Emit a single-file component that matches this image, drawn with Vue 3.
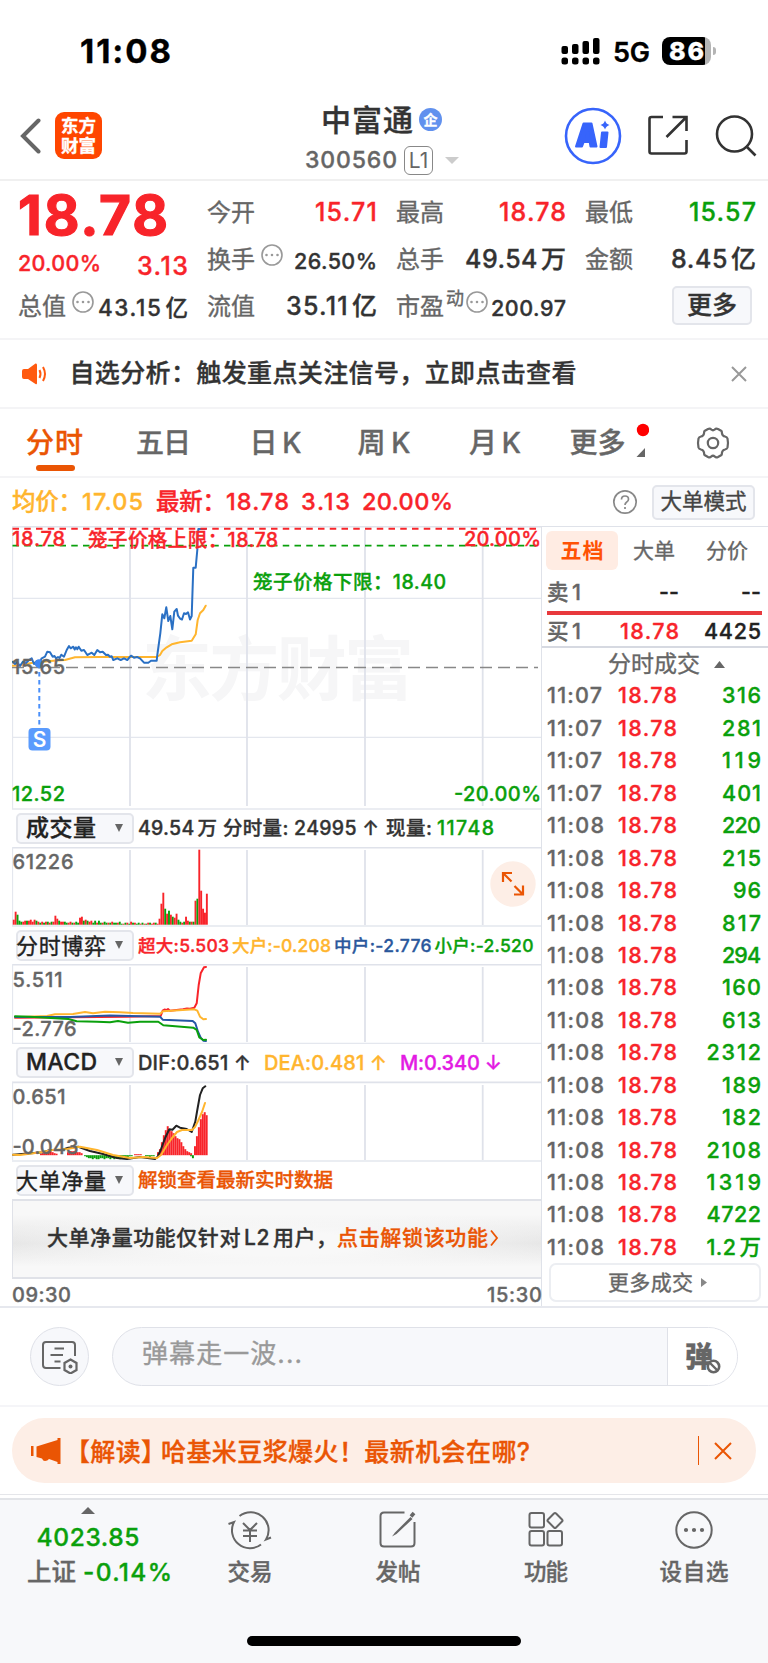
<script setup>
// Spreads the letters of an element so that its text takes up the given width.
const vFit = {
  mounted(el, { value }) {
    const count = Array.from(el.textContent).length
    if (count < 2) return
    const gap = (value - el.getBoundingClientRect().width) / (count - 1)
    el.style.letterSpacing = gap + 'px'
    el.style.marginRight = -gap + 'px'
  }
}

const tabs = [
  { name: '分时', left: 26, width: 57, active: true },
  { name: '五日', left: 136, width: 55 },
  { name: '日K', left: 249.5, width: 52 },
  { name: '周K', left: 357.5, width: 53 },
  { name: '月K', left: 469, width: 52 },
  { name: '更多', left: 569.5, width: 56 }
]

const trades = [
  ['11:07', '316'], ['11:07', '281'], ['11:07', '119'], ['11:07', '401'],
  ['11:08', '220'], ['11:08', '215'], ['11:08', '96'], ['11:08', '817'],
  ['11:08', '294'], ['11:08', '160'], ['11:08', '613'], ['11:08', '2312'],
  ['11:08', '189'], ['11:08', '182'], ['11:08', '2108'], ['11:08', '1319'],
  ['11:08', '4722'], ['11:08', '1.2', '万']
]
const volWidth = ([, v, unit]) => (unit || v.length === 4 ? 54.5 : v.length === 3 ? 39 : 28)

const gridX = [130, 247, 365, 482.7]

const priceLine =
  '12.7,661.7 15,664 17,662 20,666 23,661.5 26,663 29,660 31.7,658.3 34,664 37,661 39,664 41.7,658.3 45,656.7 47.3,651.7 50,652.3 52.7,656.7 54.5,656 56,658.3 58,657 59.5,658 61.3,654.7 64,656.7 66.7,650 69,646 70.7,648.3 73.3,646.7 74.7,649.5 76,647.3 77.3,649.3 78.7,646.7 81.3,650.7 84,650 87.3,655 89.5,653.8 91.7,652.7 94.3,655 97.3,650 100,652.3 102.7,651.7 106,655 108,654.8 110,656.7 111.7,656.3 113.3,660 117.3,658.3 120.7,660 124,658.3 127.3,660 131,655.7 134,657.7 137,657 140,658.3 144,662.7 148.3,662.7 151,660.7 153.3,660.7 156.7,660.7 157.3,655 160.3,633.3 162.3,614.3 164.3,618.3 166.3,607.3 168.3,621 170.3,616 172.3,629.3 174.3,611.7 176.7,609 178,615.7 180,618.5 182,619.5 184,613.3 186,614 188,612.3 190,619.5 191.7,616 193.3,567.7 195.7,567.7 197.3,550 198.3,529 205.7,529'
const avgLine =
  '12.5,665.7 20,665 33,662.7 50,661 65,660 75,657.3 100,657 156.7,657 160,655 162.3,651 166.7,647.3 171.7,644.3 180,642.3 191.7,640.7 195.7,634.3 197.7,620 200,613.3 203.3,610 205.7,605.7'

// Volume bars, one per minute: height, with a minus sign for a falling minute.
const volumes = [
  5, 13, -10, -4, -3, 3, 4, -4, 4, 5, 3, 5, -4, 3, -2, 3, -2, 3, -3, 2, -3, 3, 9, 6, -4, 3, 3, -3, -2, 2, 3, -2,
  2, -3, -2, 7, 8, -4, 5, -4, 3, 4, -2, -4, 2, -4, -2, 2, -3, -2, 2, -2, 3, -2, -2, 2, -3, -1, 1, -2, 2, -1, 3, -2,
  2, -1, -2, 1, -2, 1, -1, 2, -2, 1, 2, -2, 1, 6, 21, 32, -16, 11, -14, 10, -8, 7, 11,
  -5, -3, 2, -3, 8, 4, -3, 3, -3, 24, -26, 75, 34, 16, 12, 31
]
const barStep = 195 / volumes.length

const gameLines = [
  { color: '#f8242a', points: '15,1017.7 127,1016.7 160.7,1016 162.7,1010.7 164.5,1009.6 166.7,1010 168,1009 170,1010.8 183,1009.3 187,1008.5 190,1008.7 194.3,1007.8 196.7,1003.3 198.7,985 200.7,973.3 204,967.3 206,967' },
  { color: '#ffb52e', points: '15,1017.3 47,1016 55,1014.3 73,1014 85,1012 93,1013.3 105,1011.7 120,1012.3 133,1013 160,1013.7 163,1011.2 194.3,1009.3 197.3,1010.7 200,1016.7 203.3,1019.3 206,1019' },
  { color: '#2456a5', points: '15,1017 70,1017 110,1015.5 160,1016.7 162.7,1019.7 192.7,1020.9 195.3,1023.3 198,1031.7 200.7,1037.7 203.3,1040.7 206,1041' },
  { color: '#0aa00c', points: '15,1016.3 30,1016.7 46.7,1017.7 68.3,1019 76.7,1021.3 97,1021.7 110,1022.3 118,1021 128,1022.7 140,1021.7 158.3,1021.7 163.3,1025.3 193.3,1027.7 196.7,1030 199.3,1037.3 203.3,1040 206,1039.7' }
]

const span = (x0, heights) => heights.map((h, i) => ({ x: x0 + i * 1.95, h }))
const macdBars = [
  ...span(40, [1.5, 2, 3, 4, 4, 4, 3, 2, 1.5]),
  ...span(67, [3, 4, 4, 4, 4, 3, 3, 2]),
  ...span(84, [-1, -2, -3, -3, -4, -3, -4, -4, -3, -3, -4, -3, -3, -4, -3, -4, -3, -3, -4, -3, -2, -2, -2, -1, -1]),
  ...span(134, [1, 1, 1, 1]),
  ...span(145, [-1, -1, -2, -1, -1]),
  ...span(157, [3, 6, 13, 20, 25, 29, 26, 24, 22, 19, 17, 16, 13, 9, 6, 4, 3, 2]),
  ...span(190, [-1, -3]),
  ...span(194, [9, 19, 28, 36, 41, 43, 40])
]
const difLine =
  '13,1154.7 43,1152.3 50,1150 61.7,1150 68.3,1147.7 78.3,1146.7 90,1151 103,1154 117,1158 127,1159 140,1157 155,1159 157.7,1156.7 160.7,1150 165,1138.3 169.3,1129.3 172.5,1129.7 176.3,1125.7 180,1127.7 186.7,1129 191.7,1132 195.3,1121.7 197.3,1110 200,1095 202.7,1088.3 205.3,1086.3'
const deaLine =
  '13,1154.7 20,1155 43,1152 52,1150 67,1149 80,1146.7 97,1150 113,1155 130,1158 143,1157 157,1158 161,1155 167,1145 172,1138 177,1132 182,1130 192,1130 195,1127 198,1121 202,1112 205,1103'
</script>

<template>
  <div class="page">
    <div class="status">
      <b class="clock" v-fit="91">11:08</b>
      <svg class="signal" width="40" height="28" viewBox="0 0 40 28">
        <rect x="0.5" y="9" width="6.5" height="8" rx="2" /><rect x="11" y="7" width="6.5" height="10" rx="2" />
        <rect x="21.5" y="4" width="6.5" height="13" rx="2" /><rect x="32" y="1" width="6.5" height="16" rx="2" />
        <rect x="0.5" y="20.5" width="6.5" height="7" rx="2.5" /><rect x="11" y="20.5" width="6.5" height="7" rx="2.5" />
        <rect x="21.5" y="20.5" width="6.5" height="7" rx="2.5" /><rect x="32" y="20.5" width="6.5" height="7" rx="2.5" />
      </svg>
      <span class="net" v-fit="37">5G</span>
      <div class="battery"><b v-fit="35">86</b></div>
      <i class="nub"></i>
    </div>

    <header class="header">
      <svg class="back" width="22" height="36" viewBox="0 0 22 36"><path d="M18.500 2.500 3 18l15.500 15.500" fill="none" stroke="#666" stroke-width="4" stroke-linecap="round" /></svg>
      <div class="logo"><b>东方</b><b>财富</b></div>
      <div class="stock">
        <div class="name"><span v-fit="92">中富通</span><i class="corp">企</i></div>
        <div class="code"><span v-fit="92">300560</span><i class="level">L1</i><svg width="14" height="8" viewBox="0 0 14 8"><path d="M0 0h14L7 7z" fill="#ccc" /></svg></div>
      </div>
      <svg class="ai" width="58" height="58" viewBox="0 0 58 58">
        <circle cx="29" cy="29" r="27" fill="#fff" stroke="#3764fb" stroke-width="2.600" />
        <g fill="#3764fb" stroke="#3764fb" stroke-width="2" stroke-linejoin="round">
          <path fill-rule="evenodd" d="M12 39.500 19.500 16.500h8L32.500 39.500h-6l-.8-4.500h-6L18 39.500zM22 30h3l-.8-5z" />
          <path d="M38 25.500h5.500L42 40h-5.500z" />
        </g>
        <path d="M41 13.500q1 3.500 4.500 4.500q-3.500 1-4.500 4.500q-1-3.500-4.500-4.500q3.500-1 4.500-4.500z" fill="#3764fb" />
      </svg>
      <svg class="share" width="42" height="42" viewBox="0 0 42 42" fill="none" stroke="#333" stroke-width="2.600">
        <path d="M16 2H4.500Q2.500 2 2.500 4v32.500q0 2 2 2h33q2 0 2-2V25M25.500 2H39.500V16M39 2.500 19.500 22" />
      </svg>
      <svg class="search" width="42" height="42" viewBox="0 0 42 42" fill="none" stroke="#333" stroke-width="2.600">
        <circle cx="19.500" cy="19" r="17.500" /><path d="M31 31l9.500 9.500" />
      </svg>
    </header>

    <section class="quote">
      <div class="col">
        <div class="cell big"><b class="up" v-fit="150">18.78</b></div>
        <div class="cell change"><span class="up n21" v-fit="83">20.00%</span><span class="up n25 low" v-fit="51">3.13</span></div>
        <div class="cell"><label v-fit="48">总值</label><svg class="more-info" viewBox="0 0 22 22"><circle cx="11" cy="11" r="10" /><path d="M5.500 11h.01M11 11h.01M16.500 11h.01" /></svg><span class="n22 low" v-fit="90">43.15<em>亿</em></span></div>
      </div>
      <div class="col">
        <div class="cell"><label v-fit="48">今开</label><span class="up n25" v-fit="62">15.71</span></div>
        <div class="cell"><label v-fit="48">换手</label><svg class="more-info" viewBox="0 0 22 22"><circle cx="11" cy="11" r="10" /><path d="M5.500 11h.01M11 11h.01M16.500 11h.01" /></svg><span class="n21 low" v-fit="83">26.50%</span></div>
        <div class="cell"><label v-fit="48">流值</label><span class="n25" v-fit="91">35.11<em>亿</em></span></div>
      </div>
      <div class="col">
        <div class="cell"><label v-fit="48">最高</label><span class="up n25" v-fit="67">18.78</span></div>
        <div class="cell"><label v-fit="48">总手</label><span class="n25" v-fit="101">49.54<em>万</em></span></div>
        <div class="cell"><label v-fit="48">市盈</label><sup>动</sup><svg class="more-info tight" viewBox="0 0 22 22"><circle cx="11" cy="11" r="10" /><path d="M5.500 11h.01M11 11h.01M16.500 11h.01" /></svg><span class="n21 low" v-fit="75">200.97</span></div>
      </div>
      <div class="col">
        <div class="cell"><label v-fit="48">最低</label><span class="down n25" v-fit="67">15.57</span></div>
        <div class="cell"><label v-fit="48">金额</label><span class="n25" v-fit="85">8.45<em>亿</em></span></div>
        <div class="cell"><button class="more"><span v-fit="50">更多</span></button></div>
      </div>
    </section>

    <section class="notice">
      <svg width="28" height="24" viewBox="0 0 28 24"><path d="M1 9q0-2 2-2h4l7.500-5.500Q16 1 16 3v18q0 2-1.500 1L7 17H3q-2 0-2-2z" fill="#ff5a10" /><path d="M18.500 8q2 4 0 8M22 5q4 7 0 14" fill="none" stroke="#ff5a10" stroke-width="2" /></svg>
      <span class="msg" v-fit="507">自选分析：触发重点关注信号，立即点击查看</span>
      <svg class="close" width="16" height="16" viewBox="0 0 16 16"><path d="M1 1l14 14M15 1 1 15" stroke="#999" stroke-width="2" /></svg>
    </section>

    <nav class="tabs">
      <div v-for="t in tabs" :key="t.name" class="tab" :class="{ active: t.active }" :style="{ '--x': t.left + 'px' }"><span v-fit="t.width">{{ t.name }}</span></div>
      <svg class="corner" width="14" height="40" viewBox="0 0 14 40"><circle cx="8" cy="8" r="6.200" fill="#f00" /><path d="M10 26v9H1.500z" fill="#666" /></svg>
      <svg class="gear" width="34" height="34" viewBox="-17 -17 34 34" fill="none" stroke="#666" stroke-width="2.200" stroke-linejoin="round">
        <path d="M-5-14Q-3-15-1.800-13.500Q0-12 1.800-13.500Q3-15 5-14L8.500-12Q9-11 9-9.500Q9.500-7 12-6.500Q14-6 14.500-4.500Q15.500 0 14.500 4.500Q14 6 12 6.500Q9.500 7 9 9.500Q9 11 8.500 12L5 14Q3 15 1.800 13.500Q0 12-1.800 13.500Q-3 15-5 14L-8.500 12Q-9 11-9 9.500Q-9.500 7-12 6.500Q-14 6-14.500 4.500Q-15.500 0-14.500-4.500Q-14-6-12-6.500Q-9.500-7-9-9.500Q-9-11-8.500-12Z" />
        <circle r="5.200" />
      </svg>
    </nav>

    <div class="summary">
      <span class="avg" v-fit="70">均价：</span><span class="avg" v-fit="61">17.05</span>
      <span class="up s-new" v-fit="70">最新：</span><span class="up" v-fit="63">18.78</span>
      <span class="up s-diff" v-fit="49">3.13</span>
      <span class="up s-pct" v-fit="91">20.00%</span>
      <svg class="help" width="26" height="26" viewBox="0 0 26 26" fill="none" stroke="#888" stroke-width="1.700"><circle cx="13" cy="13" r="11.200" /><path d="M9.500 10.500q0-3.500 3.500-3.500t3.500 3.200q0 1.800-2 3-1.500 1-1.500 2.800M13 18v2" /></svg>
      <button class="mode"><span v-fit="86">大单模式</span></button>
    </div>

    <main class="board">
      <div class="charts">
        <svg class="plot" width="529" height="284" viewBox="12 526 529 284">
          <text class="mark" x="142" y="695" textLength="272">东方财富</text>
          <g class="grid">
            <path class="wide" d="M12 526.500H541" /><path d="M12.500 526V809M12 598.300H541M12 737.300H541" /><path d="M12 809H541" />
            <path v-for="x in gridX" :key="x" class="wide" :d="`M${x} 530V806`" />
          </g>
          <path d="M12 667.500H538" stroke="#888" stroke-width="1.600" stroke-dasharray="12 6" />
          <polyline :points="avgLine" class="line" stroke="#ffb52e" />
          <polyline :points="priceLine" class="line" stroke="#2a70c4" />
          <path d="M12.500 528.700H538" stroke="#f8242a" stroke-width="2" stroke-dasharray="6.500 5.250" />
          <path d="M12.500 545.600H538" stroke="#0aa00c" stroke-width="1.900" stroke-dasharray="6.500 5.250" />
          <path d="M39.300 664V728" stroke="#4a90fa" stroke-width="2" stroke-dasharray="4.500 3.500" />
          <circle cx="39" cy="663.500" r="4.300" fill="#3f87f5" />
          <rect x="28.500" y="728" width="22" height="22.500" rx="4" fill="#5a9bfd" />
          <text x="39.500" y="746.500" text-anchor="middle" class="sell">S</text>
          <g class="axis">
            <text x="12" y="546" textLength="53" class="r">18.78</text>
            <text x="12" y="673.500" textLength="53">15.65</text>
            <text x="12" y="801" textLength="53" class="g">12.52</text>
            <text x="464" y="546" textLength="77" class="r">20.00%</text>
            <text x="454" y="801" textLength="87" class="g">-20.00%</text>
            <text x="88" y="547" textLength="190" class="limit r">笼子价格上限：18.78</text>
            <text x="253" y="588.500" textLength="193" class="limit g">笼子价格下限：18.40</text>
          </g>
        </svg>

        <div class="bar">
          <div class="pick"><span v-fit="70">成交量</span></div>
          <p class="vals"><span v-fit="79">49.54<em>万</em></span><span class="g1" v-fit="156">分时量: 24995 ↑</span><span class="g2" v-fit="46">现量:</span><span class="down g3" v-fit="57">11748</span></p>
        </div>
        <div class="layered">
          <svg class="plot" width="529" height="80" viewBox="12 847 529 80">
            <g class="grid"><path class="wide" d="M12 847.700H541" /><path d="M12.500 847V926M12 926H541" /><path v-for="x in gridX" :key="x" class="wide" :d="`M${x} 850V925`" /></g>
            <rect v-for="(v, i) in volumes" :key="i" :x="12.800 + i * barStep" :y="924.700 - Math.abs(v)" :width="barStep" :height="Math.abs(v)" :fill="v < 0 ? '#0aa00c' : '#f8242a'" />
            <g class="axis"><text x="12.500" y="869" textLength="61">61226</text></g>
          </svg>
          <svg class="expand" width="46" height="46" viewBox="0 0 46 46"><circle cx="23" cy="23" r="22.700" fill="#fdeee6" /><path d="M13 21v-9h9M13 12l8.500 8.500M33 24.500v9h-9M33 33.500 24.500 25" fill="none" stroke="#ea5504" stroke-width="2.200" /></svg>
        </div>

        <div class="bar">
          <div class="pick flush"><span v-fit="90">分时博弈</span></div>
          <p class="vals small"><span class="up" v-fit="91">超大:5.503</span><span class="gold g4" v-fit="99">大户:-0.208</span><span class="blue g4" v-fit="97.500">中户:-2.776</span><span class="down g4" v-fit="99">小户:-2.520</span></p>
        </div>
        <svg class="plot" width="529" height="80" viewBox="12 964 529 80">
          <g class="grid"><path class="wide" d="M12 964.700H541" /><path d="M12.500 964V1043M12 1043.500H541" /><path v-for="x in gridX" :key="x" class="wide" :d="`M${x} 967V1042`" /></g>
          <polyline v-for="l in gameLines" :key="l.color" :points="l.points" :stroke="l.color" class="line" />
          <g class="axis"><text x="12.500" y="986.500" textLength="50">5.511</text><text x="12.500" y="1036" textLength="64">-2.776</text></g>
        </svg>

        <div class="bar">
          <div class="pick"><span v-fit="71">MACD</span></div>
          <p class="vals macd"><span v-fit="113">DIF:0.651 ↑</span><span class="gold g5" v-fit="123">DEA:0.481 ↑</span><span class="pink g6" v-fit="102">M:0.340 ↓</span></p>
        </div>
        <svg class="plot" width="529" height="81" viewBox="12 1081 529 81">
          <g class="grid"><path class="wide" d="M12 1082.300H541" /><path d="M12.500 1082V1160M12 1161H541" /><path v-for="x in gridX" :key="x" class="wide" :d="`M${x} 1085V1160`" /></g>
          <rect v-for="b in macdBars" :key="b.x" :x="b.x" :y="b.h > 0 ? 1155.200 - b.h : 1155.200" width="1.950" :height="Math.abs(b.h)" :fill="b.h > 0 ? '#f8242a' : '#0aa00c'" />
          <polyline :points="difLine" class="line" stroke="#222" />
          <polyline :points="deaLine" class="line" stroke="#ffb52e" />
          <g class="axis"><text x="12.500" y="1104" textLength="53">0.651</text><text x="12.500" y="1153.500" textLength="66">-0.043</text></g>
        </svg>

        <div class="bar">
          <div class="pick flush"><span v-fit="90">大单净量</span></div>
          <p class="vals"><span class="orange" v-fit="195">解锁查看最新实时数据</span></p>
        </div>
        <div class="locked"><span v-fit="290">大单净量功能仅针对<em>L2</em><em>用</em>户，</span><span class="orange" v-fit="151">点击解锁该功能</span><svg width="9" height="18" viewBox="0 0 9 18"><path d="M1 1.500 7 9 1 16.500" fill="none" stroke="#ea5504" stroke-width="1.800" /></svg></div>
        <div class="hours"><span v-fit="59">09:30</span><span v-fit="55">15:30</span></div>
      </div>

      <aside class="depth">
        <div class="kinds"><b class="chip"><span v-fit="43">五档</span></b><span class="k2" v-fit="42">大单</span><span class="k3" v-fit="42">分价</span></div>
        <div class="row ask"><span v-fit="34">卖1</span><span class="dark p" v-fit="20">--</span><span class="dark" v-fit="20">--</span></div>
        <div class="row bid"><span v-fit="34">买1</span><span class="up p" v-fit="59">18.78</span><span class="dark" v-fit="57">4425</span></div>
        <div class="ticks-head"><span v-fit="92">分时成交</span><svg width="11" height="7" viewBox="0 0 11 7"><path d="M0 7h11L5.500 0z" fill="#666" /></svg></div>
        <div v-for="(t, i) in trades" :key="i" class="row trade"><span v-fit="t[0] === '11:07' ? 55 : 57">{{ t[0] }}</span><span class="up p" v-fit="59">18.78</span><span class="down" v-fit="volWidth(t)">{{ t[1] }}<em v-if="t[2]">{{ t[2] }}</em></span></div>
        <button class="all"><span v-fit="85">更多成交</span><svg width="6" height="9" viewBox="0 0 6 9"><path d="M0 0v9l6-4.500z" fill="#888" /></svg></button>
      </aside>
    </main>

    <div class="comment">
      <div class="round">
        <svg width="38" height="34" viewBox="0 0 38 34" fill="none" stroke="#666" stroke-width="2">
          <path d="M19.500 28H5q-3 0-3-3V5q0-3 3-3h26q3 0 3 3v11M13.500 8.500h9.500M9.500 15h12.500M13.500 21.500h6" />
          <path d="M29.500 19.500l6 3.500v7l-6 3.500-6-3.500v-7z" stroke-width="2.200" /><circle cx="29.500" cy="26.500" r="2" fill="#666" stroke="none" />
        </svg>
      </div>
      <div class="field">
        <span class="hint" v-fit="160">弹幕走一波...</span>
        <div class="toggle"><b>弹</b><svg class="ban" width="15" height="15" viewBox="0 0 15 15"><circle cx="7.500" cy="7.500" r="5.700" fill="#fff" stroke="#666" stroke-width="2.600" /><path d="M3.500 3.500l8 8" stroke="#666" stroke-width="2.400" /></svg></div>
      </div>
    </div>

    <div class="promo">
      <div class="banner">
        <svg width="30" height="28" viewBox="0 0 30 28" fill="#ea5504"><path d="M0 9h2.500v10H0zM5.500 9.500 26.500 3V1H29.500v26h-3v-2L18 22q-1.500 2-4 2-2 0-3-2.500l-5.500-1.500z" /></svg>
        <span class="tag" v-fit="101">【解读】</span><span class="title" v-fit="369">哈基米豆浆爆火！最新机会在哪?</span>
        <i class="sep"></i>
        <svg class="x" width="18" height="18" viewBox="0 0 18 18"><path d="M1 1l16 16M17 1 1 17" stroke="#ea5504" stroke-width="2" /></svg>
      </div>
    </div>

    <footer class="dock">
      <div class="index">
        <svg width="14" height="7" viewBox="0 0 14 7"><path d="M0 7h14L7 0z" fill="#666" /></svg>
        <span class="down n24" v-fit="103">4023.85</span>
        <div class="idx-row"><span v-fit="49">上证</span><span class="down" v-fit="89">-0.14%</span></div>
      </div>
      <div class="item">
        <svg width="44" height="40" viewBox="0 0 44 40" fill="none" stroke="#666" stroke-width="2"><path d="M11.500 5A18 18 0 0 1 38 28.500l5-2M33 33.500A18 18 0 0 1 6 11L.5 13M15 12l7 7 7-7M22 19v12M15 19.500h14M15 25h14" /></svg>
        <span v-fit="45">交易</span>
      </div>
      <div class="item">
        <svg width="38" height="38" viewBox="0 0 38 38" fill="none" stroke="#666" stroke-width="2"><path d="M25.500 1.500H5q-3.500 0-3.500 3.500v27q0 3.500 3.500 3.500h27q3.500 0 3.500-3.500V11" /><path d="M31.500 6 16 21.500l-3 4 4.500-2.500L33.500 8z" fill="#666" stroke="none" /><path d="M32 5.500l3-3.500" stroke-width="3.600" /></svg>
        <span v-fit="45">发帖</span>
      </div>
      <div class="item">
        <svg width="36" height="36" viewBox="0 0 36 36" fill="none" stroke="#666" stroke-width="2"><rect x="1.500" y="2" width="14.500" height="14.500" rx="2" /><rect x="1.500" y="20" width="14.500" height="14.500" rx="2" /><rect x="19.500" y="20" width="14.500" height="14.500" rx="2" /><rect x="-5.700" y="-5.700" width="11.400" height="11.400" rx="1.500" transform="translate(27 9.500) rotate(45)" /></svg>
        <span v-fit="44">功能</span>
      </div>
      <div class="item">
        <svg width="38" height="38" viewBox="0 0 38 38" fill="none" stroke="#666" stroke-width="2"><circle cx="19" cy="19" r="17.700" /><path d="M11 19h.01M19 19h.01M27 19h.01" stroke-width="4.200" stroke-linecap="round" /></svg>
        <span v-fit="69">设自选</span>
      </div>
      <i class="home"></i>
    </footer>
  </div>
</template>

<style>
body { margin: 0; background: #fff; }
</style>

<style scoped>
.page { width: 768px; height: 1663px; overflow: hidden; background: #fff; color: #333; font-family: Inter, "Noto Sans CJK SC", sans-serif; font-weight: 500; line-height: 1; display: flex; flex-direction: column; -webkit-text-stroke: 0.35px; }
.page * { box-sizing: border-box; }
span, b, label, sup { display: inline-block; white-space: nowrap; flex: none; }
svg { display: block; flex: none; }
i, em { font-style: normal; }
em { margin-left: 3px; }
p { margin: 0; }
button { font: inherit; color: inherit; padding: 0; display: flex; align-items: center; justify-content: center; background: #f7f8fb; border: 2px solid #e3e5eb; border-radius: 5px; }
.up { color: #f8242a; }
.down { color: #0aa00c; }
.gold { color: #ffb52e; }
.blue { color: #2a579c; }
.pink { color: #e31be3; }
.orange { color: #ea5504; }
.dark { color: #222; }

.status { height: 102px; display: flex; align-items: center; color: #000; }
.clock { margin-left: 80px; font-size: 33px; }
.signal { margin-left: 390px; }
.net { margin-left: 12px; padding-top: 2px; font-size: 27px; font-weight: 600; }
.battery { margin-left: 12px; width: 49px; height: 28px; border-radius: 8px; background: linear-gradient(90deg, #000 43px, #b4b4b4 43px); display: flex; align-items: center; padding-left: 7px; font-size: 25px; color: #fff; }
.battery b { font-weight: 800; }
.nub { width: 3px; height: 8px; margin-left: 2px; background: #b4b4b4; border-radius: 0 3px 3px 0; }

.header { height: 79px; display: flex; align-items: center; border-bottom: 2px solid #f0f0f0; padding-bottom: 9px; }
.back { margin-left: 20px; }
.logo { margin: -1px 0 0 13px; width: 47px; height: 47px; border-radius: 9px; background: #ff4600; color: #fff; font-size: 17.500px; display: flex; flex-direction: column; align-items: center; justify-content: center; gap: 2px; }
.stock { width: 180px; margin: 8px 0 0 203px; display: flex; flex-direction: column; gap: 11px; }
.name { display: flex; align-items: center; padding-left: 16px; font-size: 30px; height: 30px; }
.corp { width: 23px; height: 23px; margin-left: 6px; border-radius: 50%; background: #6191ee; color: #fff; font-size: 14px; font-weight: 700; display: flex; align-items: center; justify-content: center; }
.code { display: flex; align-items: center; font-size: 23px; color: #666; height: 30px; }
.level { width: 29px; height: 29px; margin: 0 12px 0 7px; border: 1.500px solid #888; border-radius: 6px; font-size: 21px; font-weight: 400; display: flex; align-items: center; justify-content: center; -webkit-text-stroke: 0; }
.ai { margin-left: 79px; }
.share { margin-left: 25px; }
.search { margin-left: 26px; }

.quote { height: 159px; padding: 8px 13px 0 18px; display: grid; grid-template-columns: 170px 169px 169px 170px; column-gap: 20px; border-bottom: 2px solid #f4f4f6; }
.quote .col:nth-child(2) { margin-left: -1px; }
.quote .col:nth-child(n + 3) { margin-left: -1px; }
.cell { height: 47px; display: flex; align-items: center; justify-content: space-between; font-size: 25px; }
.cell label { color: #666; font-size: 24px; font-weight: 400; }
.big { height: 52px; font-size: 55px; -webkit-text-stroke: 1.200px; }
.change { height: 42px; padding-top: 3px; }
.n21 { font-size: 21.500px; }
.n22 { font-size: 22.500px; }
.n25 { font-size: 25px; }
.change .low { padding-top: 5px; }
.low { padding-top: 4px; }
.more-info { width: 22px; height: 22px; margin: -10px auto 0 6px; fill: none; stroke: #999; stroke-width: 1.600; stroke-linecap: round; }
.more-info path { stroke-width: 2.600; }
.more-info.tight { margin-left: 2px; }
sup { font-size: 18px; color: #666; font-weight: 400; margin: -16px 0 0 2px; vertical-align: baseline; }
.more { width: 80px; height: 39px; margin: -3px 4px 0 auto; }

.notice { height: 69px; display: flex; align-items: center; border-bottom: 2px solid #f4f4f6; padding: 0 20px 0 21px; }
.msg { font-size: 25px; margin-left: 20.500px; }
.close { margin: 0 1px 0 auto; }

.tabs { height: 69px; position: relative; border-bottom: 2px solid #f4f4f6; display: grid; align-items: center; color: #666; font-size: 28px; }
.tab { grid-area: 1 / 1; margin-left: var(--x); height: 67px; display: flex; align-items: center; }
.active { color: #ea5504; position: relative; }
.active::after { content: ""; position: absolute; left: 10px; bottom: 5px; width: 39px; height: 6px; border-radius: 3px; background: #ea5504; }
.corner { grid-area: 1 / 1; margin: -1px 0 0 634.500px; }
.gear { grid-area: 1 / 1; margin-left: 696px; }

.summary { height: 48px; display: flex; align-items: center; font-size: 23.500px; padding-left: 12px; }
.avg { color: #ffb52e; }
.s-new { margin-left: 13px; }
.s-diff { margin-left: 12px; }
.s-pct { margin-left: 12px; }
.help { margin-left: 159px; }
.mode { margin-left: 14px; width: 103px; height: 35px; font-size: 21.500px; font-weight: 400; color: #444; }

.board { height: 782px; display: flex; border-bottom: 2px solid #e6e8ee; }
.charts { width: 542px; padding-left: 12px; border-right: 1px solid #dfe2e9; }
.plot { font-family: Inter, "Noto Sans CJK SC", sans-serif; }
.grid { fill: none; stroke: #e4e7ee; stroke-width: 1.300; }
.grid .wide { stroke-width: 1.800; stroke: #dfe2ea; }
.line { fill: none; stroke-width: 2; stroke-linejoin: round; stroke-linecap: round; }
.mark { font-size: 70px; font-weight: 700; fill: #f6f6f7; }
.sell { font-size: 21px; font-weight: 600; fill: #fff; }
.axis { font-size: 20px; fill: #666; stroke: #666; stroke-width: 0.350; font-weight: 500; }
.axis .r { fill: #f8242a; stroke: #f8242a; }
.axis .g { fill: #0aa00c; stroke: #0aa00c; }
.limit { font-size: 19.500px; }
.bar { height: 37px; display: flex; align-items: center; padding-left: 4px; }
.pick { position: relative; width: 118px; height: 31px; background: #f7f8fb; border: 2px solid #e3e5eb; border-radius: 5px; display: flex; align-items: center; padding-left: 8px; font-size: 23px; color: #222; }
.pick::after { content: ""; position: absolute; right: 9px; top: 9px; border: 4.500px solid transparent; border-top: 8px solid #666; border-bottom: 0; }
.pick.flush { padding-left: 0; font-size: 22px; font-weight: 400; }
.flush span { margin-left: -2px; }
.vals { display: flex; align-items: center; margin-left: 4px; font-size: 19.500px; }
.small { font-size: 17.500px; }
.macd { font-size: 20px; }
.g1 { margin-left: 6px; }
.g2 { margin-left: 7px; }
.g3 { margin-left: 5px; }
.g4 { margin-left: 3px; }
.g5 { margin-left: 13px; }
.g6 { margin-left: 13px; }
.layered { position: relative; }
.expand { position: absolute; left: 478px; top: 14px; }
.locked { height: 80px; display: flex; align-items: center; padding: 0 0 3px 34px; font-size: 21px; border: 2px solid #e0e2e8; border-width: 2px 0 2px 1px; background: radial-gradient(ellipse 56% 50% at 50% 56%, #f8f8f8 30%, rgba(248, 248, 248, 0)), linear-gradient(#f8f8f8 18%, #e4e4e4 56%, #f8f8f8 86%); }
.locked svg { margin-left: 2px; }
.hours { width: 530px; height: 28px; padding-top: 4px; display: flex; align-items: center; justify-content: space-between; font-size: 20px; color: #666; }

.depth { width: 226px; border-top: 1px solid #dfe2e9; color: #666; }
.kinds { height: 47px; display: flex; align-items: center; padding-left: 4px; font-size: 21px; font-weight: 400; }
.chip { width: 72px; height: 39px; border-radius: 6px; background: #ffece3; color: #ff5204; display: flex; align-items: center; justify-content: center; -webkit-text-stroke: 0; }
.k2 { margin-left: 15px; }
.k3 { margin-left: 31px; }
.row { display: grid; grid-template-columns: 58px 74px 1fr; align-items: center; padding: 0 7px 0 5px; font-size: 21.500px; }
.row > * { justify-self: start; }
.row > *:nth-child(n + 2) { justify-self: end; }
.ask { height: 41px; border-bottom: 4px solid #e8393d; margin: 0 6px 0 5px; padding: 0 1px 0 0; }
.bid { height: 33px; padding-top: 3px; border-bottom: 2px solid #d6d9e1; }
.ticks-head { height: 32px; display: flex; align-items: center; padding-left: 66px; font-size: 23px; font-weight: 400; }
.ticks-head svg { margin-left: 14px; }
.trade { height: 32.450px; grid-template-columns: 57px 73px 1fr; }
.all { width: 212px; height: 39px; margin: -1px 0 0 7px; padding-left: 5px; background: #fff; border-color: #eceef2; border-radius: 7px; font-size: 21px; font-weight: 400; color: #666; }
.all svg { margin-left: 8px; }

.comment { height: 99px; padding: 0 30px; display: flex; align-items: center; border-bottom: 2px solid #f5f5f8; }
.round { width: 59px; height: 59px; border: 1.500px solid #dfe1e8; border-radius: 50%; background: #f7f8fb; display: flex; align-items: center; justify-content: center; }
.field { width: 626px; height: 59px; margin-left: 23px; display: flex; align-items: center; border: 1.500px solid #dfe1e8; border-radius: 30px; background: #f7f8fb; overflow: hidden; }
.hint { font-size: 26px; font-weight: 400; color: #999; margin: -5px 0 0 29px; }
.toggle { width: 70px; height: 59px; margin-left: auto; background: #fff; border-left: 1.500px solid #dfe1e8; position: relative; display: flex; align-items: center; padding-left: 17px; }
.toggle b { font-size: 28px; font-weight: 900; color: #666; }
.ban { position: absolute; left: 38px; top: 32px; }

.promo { height: 88px; padding: 11px 12px 0; border-bottom: 1px solid #e5e6ea; }
.banner { height: 65px; border-radius: 33px; background: #fdeee6; color: #ea5504; display: flex; align-items: center; padding-left: 19px; font-size: 25px; }
.banner span { padding-top: 4px; }
.tag { margin-left: 4px; }
.title { margin-left: -5px; }
.sep { width: 1.500px; height: 29px; background: #ea5504; margin-left: auto; }
.x { margin: 0 24px 0 15px; }

.dock { flex: 1; margin-top: 3px; border-top: 2px solid #e2e4e8; background: #f7f8fa; display: flex; position: relative; color: #666; font-size: 23px; }
.index { width: 176px; display: flex; flex-direction: column; align-items: center; padding-top: 7px; }
.n24 { font-size: 24.500px; margin-top: 11px; }
.idx-row { display: flex; align-items: center; font-size: 24.500px; margin-top: 10px; padding-left: 23px; gap: 7px; }
.item { width: 148px; height: 90px; display: flex; flex-direction: column; align-items: center; justify-content: space-between; padding: 11px 0 7px; font-size: 22.500px; }
.home { position: absolute; left: 247px; bottom: 17px; width: 274px; height: 10px; border-radius: 5px; background: #000; }
</style>
